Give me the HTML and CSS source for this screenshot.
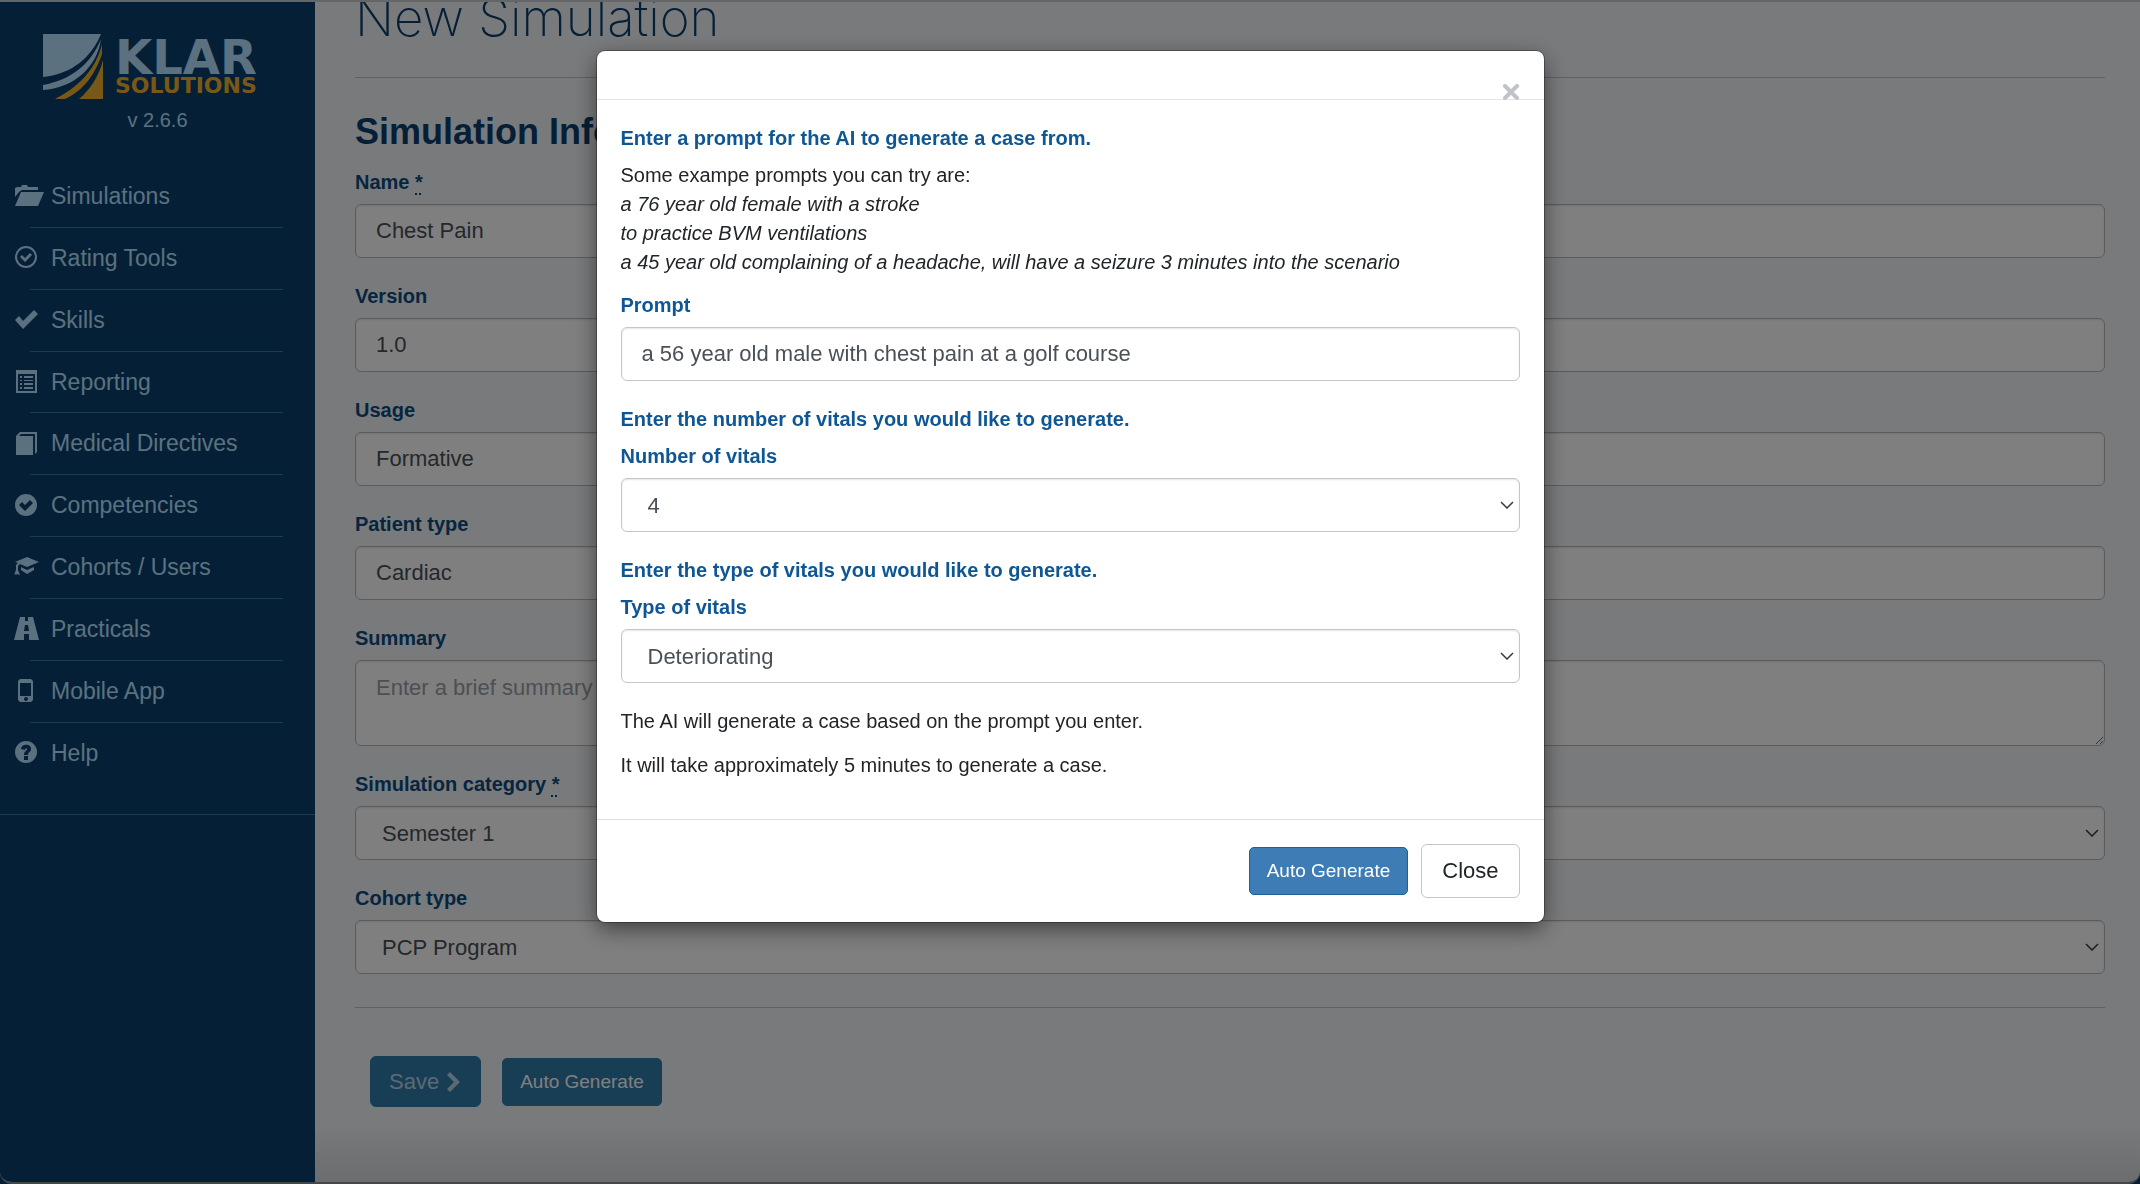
FILE: index.html
```html
<!DOCTYPE html>
<html lang="en">
<head>
    <meta charset="UTF-8">
    <meta name="viewport" content="width=device-width, initial-scale=1.0">
    <title>New Simulation</title>
    <link rel="stylesheet" href="styles.css">
</head>
<body>
    <div class="page">
        <div class="sidebar">
            <div class="logo">
                <svg class="logo-mark" viewBox="0 0 60 66" width="60" height="66" aria-hidden="true">
                    <path class="light" d="M0 0H58C49 22 30 40 0 43Z"/>
                    <path class="light" d="M0 51C28 46 48 30 58 5C54 34 30 54 0 56Z"/>
                    <path class="gold" d="M12 65C34 54 53 36 59 10V20C53 38 42 56 22 65Z"/>
                    <path class="gold" d="M36 65C47 56 56 42 60 26V65Z"/>
                </svg>
                <div class="logo-text">
                    <span class="logo-klar">KLAR</span>
                    <span class="logo-sol">SOLUTIONS</span>
                </div>
            </div>
            <div class="version">v 2.6.6</div>

            <ul class="nav">
                <li><a href="#"><svg viewBox="0 0 30 24" width="30" height="24"><path d="M0 13V4l2-1h4l1-2h5l1 2h10v3H7L4 8Z"/><path d="M6 8h23l-6 14H0Z"/></svg>Simulations</a></li>
                <li><a href="#"><svg viewBox="0 0 30 24" width="30" height="24"><circle class="line" cx="11" cy="11" r="10"/><path d="M5 11l2-2 3 3 5-5 2 2-7 7Z"/></svg>Rating Tools</a></li>
                <li><a href="#"><svg viewBox="0 0 30 24" width="30" height="24"><path d="M0 12l4-4 4 5L19 2l4 4L8 21Z"/></svg>Skills</a></li>
                <li><a href="#"><svg viewBox="0 0 30 24" width="30" height="24"><path d="M1 0h21v23H1Zm2 4v17h17V4Z" fill-rule="evenodd"/><path d="M5 6h2v2H5Zm4 0h9v2H9ZM5 10h2v1H5Zm4 0h9v1H9ZM5 13h2v2H5Zm4 0h9v2H9ZM5 17h2v2H5Zm4 0h9v2H9Z"/></svg>Reporting</a></li>
                <li><a href="#"><svg viewBox="0 0 30 24" width="30" height="24"><path d="M1 4l4-4h17v20l-2 2V2H6L4 4h14v19H1Z"/></svg>Medical Directives</a></li>
                <li><a href="#"><svg viewBox="0 0 30 24" width="30" height="24"><path fill-rule="evenodd" d="M11 0a11 11 0 1 0 0 22a11 11 0 1 0 0-22ZM4 11l3-3 3 3 5-5 3 3-8 8Z"/></svg>Competencies</a></li>
                <li><a href="#"><svg viewBox="0 0 30 24" width="30" height="24"><path d="M0 7L12 2l12 5-12 5-7-3-2 2v4l2 5-3-1-1 1-1-1-1 1 2-5v-5l2-2Z"/><path d="M6 12l6 3 7-3v3l-7 4-6-4Z"/></svg>Cohorts / Users</a></li>
                <li><a href="#"><svg viewBox="0 0 30 24" width="30" height="24"><path fill-rule="evenodd" d="M5 0h5v4h3V0h5l6 23H14v-6h-5v6H-1ZM10 8l-1 6h5l-1-6Z"/></svg>Practicals</a></li>
                <li><a href="#"><svg viewBox="0 0 30 24" width="30" height="24"><path fill-rule="evenodd" d="M5 0h11l2 2v19l-2 2H5l-2-2V2ZM5 4v13h11V4ZM11 18a2 2 0 1 0 0 4a2 2 0 1 0 0-4Z"/></svg>Mobile App</a></li>
                <li><a href="#"><svg viewBox="0 0 30 24" width="30" height="24"><path fill-rule="evenodd" d="M11 0a11 11 0 1 0 0 22a11 11 0 1 0 0-22ZM6 8C6 3 16 2 16 8c0 3-3 3-3 6h-4c0-4 3-4 3-6 0-1-2-1-2 1ZM9 15h4v4H9Z"/></svg>Help</a></li>
            </ul>
            <hr class="nav-end">
        </div>

        <div class="content">
            <h1>New Simulation</h1>
            <hr>
            <h2>Simulation Information</h2>
            <form>
                <div class="group">
                    <label for="name">Name <abbr title="required">*</abbr></label>
                    <input type="text" id="name" value="Chest Pain">
                </div>
                <div class="group">
                    <label for="ver">Version</label>
                    <input type="text" id="ver" value="1.0">
                </div>
                <div class="group">
                    <label for="usage">Usage</label>
                    <input type="text" id="usage" value="Formative">
                </div>
                <div class="group">
                    <label for="patient">Patient type</label>
                    <input type="text" id="patient" value="Cardiac">
                </div>
                <div class="group">
                    <label for="summary">Summary</label>
                    <textarea id="summary" placeholder="Enter a brief summary"></textarea>
                </div>
                <div class="group">
                    <label for="category">Simulation category <abbr title="required">*</abbr></label>
                    <div class="select">
                        <select id="category"><option>Semester 1</option></select>
                        <svg viewBox="0 0 14 8" width="14" height="8"><path d="M1 1l6 6 6-6"/></svg>
                    </div>
                </div>
                <div class="group">
                    <label for="cohort">Cohort type</label>
                    <div class="select">
                        <select id="cohort"><option>PCP Program</option></select>
                        <svg viewBox="0 0 14 8" width="14" height="8"><path d="M1 1l6 6 6-6"/></svg>
                    </div>
                </div>
                <hr>
                <div class="actions">
                    <button type="button" class="btn btn-save">Save <svg viewBox="0 0 14 20" width="14" height="20"><path d="M1 3l3-3 10 10-10 10-3-3 7-7Z"/></svg></button>
                    <button type="button" class="btn btn-auto">Auto Generate</button>
                </div>
            </form>
        </div>
    </div>

    <div class="backdrop">
        <div class="modal" role="dialog">
            <div class="modal-header">
                <button type="button" class="close" aria-label="Close dialog"><svg viewBox="0 0 16 16" width="16" height="16"><path d="M2 2l12 12M14 2L2 14"/></svg></button>
            </div>
            <div class="modal-body">
                <p class="lead">Enter a prompt for the AI to generate a case from.</p>
                <p class="examples">Some exampe prompts you can try are:<br>
                    <i>a 76 year old female with a stroke<br>
                    to practice BVM ventilations<br>
                    a 45 year old complaining of a headache, will have a seizure 3 minutes into the scenario</i></p>
                <div class="group">
                    <label for="prompt">Prompt</label>
                    <input type="text" id="prompt" value="a 56 year old male with chest pain at a golf course">
                </div>
                <p class="lead">Enter the number of vitals you would like to generate.</p>
                <div class="group">
                    <label for="vitals">Number of vitals</label>
                    <div class="select">
                        <select id="vitals"><option>4</option></select>
                        <svg viewBox="0 0 14 8" width="14" height="8"><path d="M1 1l6 6 6-6"/></svg>
                    </div>
                </div>
                <p class="lead">Enter the type of vitals you would like to generate.</p>
                <div class="group">
                    <label for="vtype">Type of vitals</label>
                    <div class="select">
                        <select id="vtype"><option>Deteriorating</option></select>
                        <svg viewBox="0 0 14 8" width="14" height="8"><path d="M1 1l6 6 6-6"/></svg>
                    </div>
                </div>
                <p>The AI will generate a case based on the prompt you enter.</p>
                <p>It will take approximately 5 minutes to generate a case.</p>
            </div>
            <div class="modal-footer">
                <button type="button" class="btn btn-primary">Auto Generate</button>
                <button type="button" class="btn btn-close">Close</button>
            </div>
        </div>
    </div>
</body>
</html>
```

FILE: styles.css
```css
* {
    box-sizing: border-box;
}
body {
    margin: 0;
    height: 100vh;
    overflow: hidden;
    font-family: "Liberation Sans", Arial, sans-serif;
    font-size: 20px;
    line-height: 28px;
    color: #212529;
    background: #0a3e6c;
}
.page {
    display: flex;
    height: 100vh;
    overflow: hidden;
    border-top: 2px solid #c8ccd0;
    border-bottom: 2px solid #8a9096;
    border-radius: 0 0 12px 12px;
    background: linear-gradient(#f3f5f9 95%, #d8dadd);
}

/* sidebar */
.sidebar {
    flex: none;
    width: 315px;
    padding-top: 32px;
    background: #0a3e6c;
    color: #b8e2ff;
}
.logo {
    display: flex;
    gap: 12px;
    padding-left: 43px;
}
.logo-mark .light {
    fill: #b8e2ff;
}
.logo-mark .gold {
    fill: #f0b02c;
}
.logo-text {
    display: flex;
    flex-direction: column;
    padding-top: 3px;
    font-family: "DejaVu Sans", sans-serif;
    font-weight: bold;
}
.logo-klar {
    font-size: 48px;
    line-height: 40px;
}
.logo-sol {
    font-size: 22px;
    line-height: 18px;
    color: #f0b02c;
}
.version {
    padding-top: 6px;
    text-align: center;
}
.nav {
    list-style: none;
    margin: 32px 0 0;
    padding: 0;
    font-size: 23px;
    line-height: 1.42857;
}
.nav a {
    display: flex;
    align-items: center;
    gap: 6px;
    padding: 14px 0 14px 15px;
    color: inherit;
    text-decoration: none;
}
.nav svg {
    fill: currentColor;
    overflow: visible;
}
.nav .line {
    fill: none;
    stroke: currentColor;
    stroke-width: 2;
}
.nav li::after {
    content: "";
    display: block;
    height: 1px;
    margin: 0 32px 0 30px;
    background: #327ca8;
}
.nav li:last-child::after {
    background: none;
}
.nav-end {
    margin: 30px 0 0;
    border: 0;
    border-top: 1px solid #327ca8;
}

/* main form */
.content {
    flex: 1;
    margin-top: -12px;
    padding: 0 35px 0 40px;
}
h1, h2 {
    margin: 0;
    color: #0a3e6c;
}
h1 {
    font-family: Inter, sans-serif;
    font-size: 51px;
    font-weight: 200;
    line-height: 56px;
}
h2 {
    margin: 34px 0 16px;
    font-size: 36px;
    line-height: 40px;
}
.content hr {
    margin: 31px 0 0;
    border: 0;
    border-top: 1px solid #b4c6d2;
}
.content form hr {
    margin-top: 33px;
}
.group {
    margin-bottom: 24px;
}
label, .lead {
    display: block;
    margin: 0 0 8px;
    font-weight: bold;
    color: #0f5794;
}
.content label {
    color: #0a4b80;
}
abbr {
    text-decoration: underline dotted;
    text-underline-offset: 4px;
}
input, select, textarea {
    display: block;
    width: 100%;
    height: 54px;
    margin: 0;
    padding: 0 20px;
    border: 1px solid #c3c7ca;
    border-radius: 6px;
    background: #fff;
    box-shadow: inset 0 1px 2px rgba(0, 0, 0, .1);
    font-family: inherit;
    font-size: 22px;
    color: #495057;
}
.content input, .content select, .content textarea {
    border-color: #b4b8bc;
}
select {
    padding: 0 26px;
    appearance: none;
}
textarea {
    height: 86px;
    padding-top: 12px;
    line-height: 30px;
}
textarea::placeholder {
    color: #99a0a6;
}
.select {
    position: relative;
}
.select svg {
    position: absolute;
    right: 6px;
    top: 23px;
    fill: none;
    stroke: #343a40;
    stroke-width: 1.5;
    pointer-events: none;
}
.btn {
    border: 1px solid #c3c7ca;
    border-radius: 6px;
    background: #fff;
    font-family: inherit;
    font-size: 22px;
    color: #212529;
}
.actions {
    display: flex;
    align-items: center;
    gap: 21px;
    padding: 48px 15px 0;
}
.btn-save {
    display: flex;
    align-items: center;
    gap: 7px;
    height: 51px;
    padding: 0 20px 0 18px;
    border-color: #307caa;
    background: #307caa;
    color: #b8d4e8;
}
.btn-save svg {
    fill: currentColor;
}
.btn-auto, .btn-primary {
    height: 48px;
    padding: 0 17px;
    border-color: #307caa;
    border-radius: 5px;
    background: #307caa;
    font-size: 19px;
    color: #fff;
}

/* modal */
.backdrop {
    position: fixed;
    inset: 0;
    padding-top: 51px;
    background: rgba(0, 0, 0, .5);
}
.modal {
    max-width: 947px;
    margin: 0 auto;
    border-radius: 8px;
    background: #fff;
    box-shadow: 0 7px 22px rgba(0, 0, 0, .5), 0 0 0 1px rgba(0, 0, 0, .3);
}
.modal-header {
    display: flex;
    justify-content: flex-end;
    height: 49px;
    padding: 33px 25px 0;
    border-bottom: 1px solid #e5e5e5;
}
.close {
    height: 16px;
    padding: 0;
    border: 0;
    background: none;
    line-height: 0;
}
.close svg {
    fill: none;
    stroke: #c0c4c8;
    stroke-width: 4;
    stroke-linecap: round;
}
.modal-body {
    padding: 24px;
}
.modal-body p {
    margin: 0 0 16px;
}
.modal-body .lead {
    margin-bottom: 9px;
}
.modal-body .examples {
    margin-bottom: 14px;
    line-height: 29px;
}
.modal-footer {
    display: flex;
    justify-content: flex-end;
    align-items: center;
    gap: 13px;
    padding: 24px;
    border-top: 1px solid #dcdfe1;
}
.btn-primary {
    border-color: #1f5f9c;
    background: #3d7cb4;
}
.btn-close {
    height: 54px;
    padding: 0 20px;
}
```
